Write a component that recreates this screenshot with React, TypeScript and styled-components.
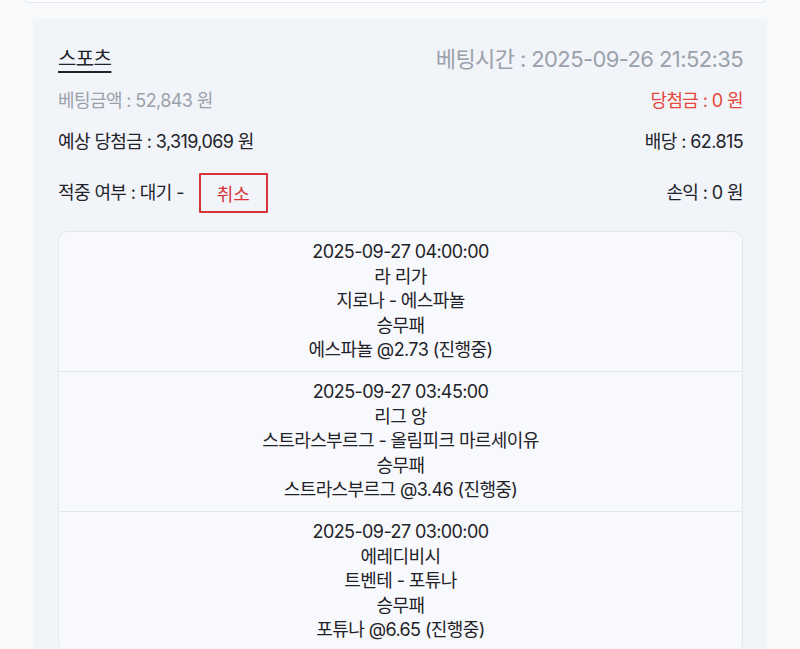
import React from "react";
import styled, {createGlobalStyle} from "styled-components";

const GlobalStyle = createGlobalStyle`
  html, body {
    margin: 0;
    padding: 0;
    background: #f8fafc;
    font-family: "Inter", "Noto Sans CJK KR", sans-serif;
    color: #1f2329;
    overflow: hidden;
  }
`

const Page = styled.div`
  width: 800px;
  height: 649px;
  overflow: hidden;
`

const PrevCard = styled.div`
  margin-left: 25px;
  width: 740px;
  height: 3px;
  box-sizing: border-box;
  background: #ffffff;
  border: 1px solid #e3e7ee;
  border-top: none;
  border-radius: 0 0 10px 10px;
`

const Panel = styled.div`
  margin: 16px 0 0 33px;
  width: 734px;
  box-sizing: border-box;
  background: #f1f4f9;
  padding: 26px 24px 0 25px;
  display: flex;
  flex-direction: column;
`

const Row = styled.div<{ $gap: number }>`
  display: flex;
  justify-content: space-between;
  align-items: center;
  margin-top: ${p => p.$gap}px;
  letter-spacing: -0.6px;
`

const Category = styled.span`
  font-size: 20px;
  line-height: 28px;
  text-decoration: underline;
  text-underline-offset: 5px;
  color: #1f2329;
`

const Text = styled.span<{ $tone?: "muted" | "red" | "dark"; $size?: number }>`
  font-size: ${p => p.$size ?? 18}px;
  line-height: 24px;
  color: ${p => p.$tone === "muted" ? "#9ba1aa" : p.$tone === "red" ? "#e5483b" : "#1f2329"};
`

const Status = styled.div`
  display: flex;
  align-items: center;
  gap: 15px;
`

const CancelButton = styled.button`
  width: 69px;
  height: 40px;
  box-sizing: border-box;
  border: 2px solid #d8353a;
  border-radius: 1px;
  background: transparent;
  color: #d8353a;
  font-family: inherit;
  font-size: 18px;
  cursor: pointer;
`

const GameList = styled.div`
  margin-top: 18px;
  background: #f8f9fc;
  border: 1px solid #e3e7ee;
  border-radius: 10px;
`

const Game = styled.div`
  padding: 8px 0;
  border-bottom: 1px solid #e3e7ee;
  text-align: center;
  font-size: 18px;
  line-height: 24.6px;
  letter-spacing: -0.6px;
  color: #1f2329;
`

const games = [
  {time: "2025-09-27 04:00:00", league: "라 리가", match: "지로나 - 에스파뇰", market: "승무패", pick: "에스파뇰 @2.73 (진행중)"},
  {time: "2025-09-27 03:45:00", league: "리그 앙", match: "스트라스부르그 - 올림피크 마르세이유", market: "승무패", pick: "스트라스부르그 @3.46 (진행중)"},
  {time: "2025-09-27 03:00:00", league: "에레디비시", match: "트벤테 - 포튜나", market: "승무패", pick: "포튜나 @6.65 (진행중)"},
]

const App: React.FC = () => {
  return (
    <Page>
      <GlobalStyle/>
      <PrevCard/>
      <Panel>
        <Row $gap={0}>
          <Category>스포츠</Category>
          <Text $tone="muted" $size={22}>베팅시간 : 2025-09-26 21:52:35</Text>
        </Row>
        <Row $gap={16}>
          <Text $tone="muted">베팅금액 : 52,843 원</Text>
          <Text $tone="red">당첨금 : 0 원</Text>
        </Row>
        <Row $gap={17}>
          <Text>예상 당첨금 : 3,319,069 원</Text>
          <Text>배당 : 62.815</Text>
        </Row>
        <Row $gap={19}>
          <Status>
            <Text>적중 여부 : 대기 -</Text>
            <CancelButton>취소</CancelButton>
          </Status>
          <Text>손익 : 0 원</Text>
        </Row>
        <GameList>
          {games.map(g => (
            <Game key={g.time}>
              <div>{g.time}</div>
              <div>{g.league}</div>
              <div>{g.match}</div>
              <div>{g.market}</div>
              <div>{g.pick}</div>
            </Game>
          ))}
        </GameList>
      </Panel>
    </Page>
  )
}

export default App;
